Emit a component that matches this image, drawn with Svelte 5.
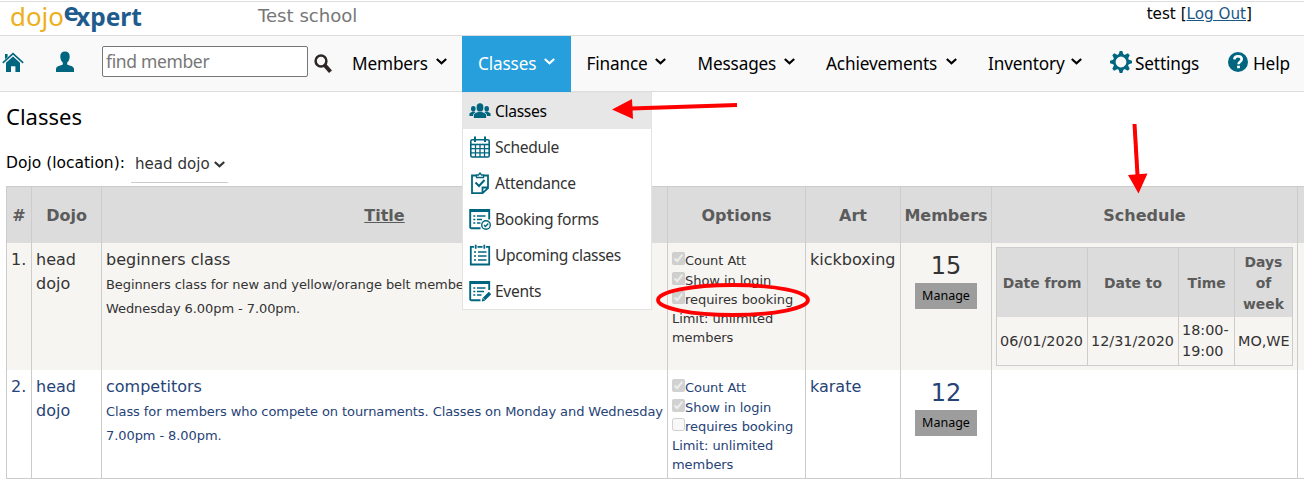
<script>
  const menu = [
    { label: "Members", width: 126 },
    { label: "Classes", width: 108.5, active: true },
    { label: "Finance", width: 111 },
    { label: "Messages", width: 128.5 },
    { label: "Achievements", width: 162 },
    { label: "Inventory", width: 125 },
  ];

  const submenu = [
    { label: "Classes", icon: "group", active: true },
    { label: "Schedule", icon: "calendar" },
    { label: "Attendance", icon: "clipboard" },
    { label: "Booking forms", icon: "booking" },
    { label: "Upcoming classes", icon: "list" },
    { label: "Events", icon: "events" },
  ];

  const classes = [
    {
      id: 1,
      dojo: "head dojo",
      title: "beginners class",
      description:
        "Beginners class for new and yellow/orange belt members. Classes on Monday and Wednesday 6.00pm - 7.00pm.",
      booking: true,
      art: "kickboxing",
      members: 15,
      schedule: { from: "06/01/2020", to: "12/31/2020", time: "18:00-19:00", days: "MO,WE" },
    },
    {
      id: 2,
      dojo: "head dojo",
      title: "competitors",
      description:
        "Class for members who compete on tournaments. Classes on Monday and Wednesday 7.00pm - 8.00pm.",
      booking: false,
      art: "karate",
      members: 12,
    },
  ];
</script>

{#snippet chevron()}
  <svg class="chevron" width="11" height="7" viewBox="0 0 11 7">
    <path d="M.8 1 5.5 5.2 10.2 1" fill="none" stroke="currentColor" stroke-width="2.2" />
  </svg>
{/snippet}

{#snippet menuIcon(name)}
  <svg class="menu-icon" width="22" height="22" viewBox="0 0 22 22" fill="none" stroke="#006680" stroke-width="1.6">
    {#if name === "group"}
      <g fill="#006680" stroke="none">
        <ellipse cx="11" cy="7.4" rx="3.4" ry="4.2" />
        <path d="M4.9 18v-3c0-1.6 2.2-2.2 4.6-3h3c2.4.8 4.6 1.4 4.6 3v3z" />
        <ellipse cx="4.3" cy="8.7" rx="2.3" ry="2.8" />
        <ellipse cx="17.7" cy="8.7" rx="2.3" ry="2.8" />
        <path d="M.4 16v-2c0-1.2 1.6-1.7 3-2.3h2.3l1 .6c-2 .8-2.6 1.7-2.6 3.7zM21.6 16v-2c0-1.2-1.6-1.7-3-2.3h-2.3l-1 .6c2 .8 2.6 1.7 2.6 3.7z" />
      </g>
    {:else if name === "calendar"}
      <rect x="1.8" y="3.8" width="18.4" height="17.2" rx="1.5" />
      <path d="M2 8.5h18" />
      <path d="M2 12.7h18M2 16.8h18M6.5 9v12M11 9v12M15.5 9v12" stroke-width="1.3" />
      <path d="M6 .5v5.5M16 .5v5.5" stroke-width="2" />
    {:else if name === "clipboard"}
      <path d="M7 3.5H3v17.700h10.5l5.500-5V3.500H15M19 15.5h-5.500v5" stroke-width="1.8" />
      <path d="M7.5 5.500V3h2L11 1l1.500 2h2v2.500z" stroke-width="1.3" />
      <path d="m6.5 10.5 3.500 3.500 5.500-6" stroke-width="2" />
    {:else if name === "booking"}
      <path d="M11.500 20.200H2.500q-1.300 0-1.300-1.300V2h19v9.500M1.2 3h19" stroke-width="1.9" />
      <path d="M4.3 8h2M8 8h8.5M4.3 11.5h2M8 11.5h5M4.3 15h2M8 15h3.5" />
      <circle cx="17" cy="17" r="4.3" stroke-width="1.4" />
      <path d="m15 17 1.5 1.6 2.8-3" stroke-width="1.4" />
    {:else if name === "list"}
      <path d="M5 2.800H1.800V20.500h18.400V2.800H17M8.5 2.800h5M6.700.8v4M15.300.8v4" stroke-width="1.8" />
      <path d="M5 8h2M9 8h8.5M5 12h2M9 12h8.5M5 16h2M9 16h8.5" />
    {:else}
      <path d="M11.500 20.200H2.500q-1.300 0-1.300-1.300V2h19v8M1.2 3h19" stroke-width="1.9" />
      <path d="M4.3 8h2M8 8h8.5M4.3 11.5h2M8 11.5h7M4.3 15h2M8 15h4.5" />
      <path d="m15 19 6-6" stroke-width="3.4" />
      <path d="m12.700 21.500.8-3.500 2.700 2.700z" fill="#006680" stroke="none" />
    {/if}
  </svg>
{/snippet}

<div class="page">
  <header>
    <svg class="logo" width="136" height="33" viewBox="0 0 136 33">
      <text x="10" y="23.5" textLength="54" lengthAdjust="spacingAndGlyphs" class="logo-dojo">dojo</text>
      <text x="63.5" y="19" textLength="15.5" lengthAdjust="spacingAndGlyphs" class="logo-expert">e</text>
      <text x="76" y="23.5" textLength="66" lengthAdjust="spacingAndGlyphs" class="logo-expert">xpert</text>
    </svg>
    <span class="school">Test school</span>
    <span class="account">test [<a href="#logout">Log Out</a>]</span>
  </header>

  <nav>
    <div class="tools">
      <svg class="home" width="22" height="22" viewBox="0 0 22 22" fill="#006680">
        <path d="M3 3h2.6v3L3 8.2zM11 5.6l7 6.2V21h-4.6v-5.8H9V21H4v-9.2z" />
        <path d="M.8 11.8 11 2.6l10.2 9.2" fill="none" stroke="#006680" stroke-width="1.6" />
      </svg>
      <svg class="person" width="20" height="22" viewBox="0 0 20 22" fill="#006680">
        <path d="M10 .5c3 0 4.7 2 4.7 4.8 0 2.6-.9 5-2.5 6.3v1.9c2 1.200 6.800 1.400 6.800 4.500v3H1v-3c0-3.100 4.800-3.300 6.800-4.500v-1.900C6.200 10.300 5.300 7.900 5.300 5.300 5.300 2.500 7 .5 10 .5z" />
      </svg>
      <input type="text" placeholder="find member" />
      <svg class="search" width="19" height="20" viewBox="0 0 19 20" fill="none" stroke="#2d2624">
        <circle cx="7" cy="7" r="5.4" stroke-width="2.5" />
        <path d="m10.8 11.3 5.7 6.5" stroke-width="4" />
      </svg>
    </div>
    {#each menu as item}
      <div class="menu-item" class:active={item.active} style="width: {item.width}px">
        <span>{item.label}</span>
        {@render chevron()}
        {#if item.active}
          <div class="dropdown">
            {#each submenu as entry}
              <div class="entry" class:selected={entry.active}>
                {@render menuIcon(entry.icon)}
                <span>{entry.label}</span>
              </div>
            {/each}
          </div>
        {/if}
      </div>
    {/each}
    <div class="settings">
      <svg width="24" height="24" viewBox="-12 -12 24 24" fill="none" stroke="#006680">
        <circle r="6.7" stroke-width="2.6" />
        {#each [0, 45, 90, 135, 180, 225, 270, 315] as angle}
          <path d="M-2.6-7-1.3-11H1.3L2.6-7z" fill="#006680" stroke="none" transform="rotate({angle})" />
        {/each}
      </svg>
      <span>Settings</span>
    </div>
    <div class="help">
      <svg width="20" height="20" viewBox="0 0 20 20">
        <circle cx="10" cy="10" r="10" fill="#006680" />
        <path d="M6.3 7.4C6.5 5.2 8 4.3 10 4.3c2.2 0 3.7 1.2 3.7 3 0 2.4-3.2 2.5-3.2 5" fill="none" stroke="#fff" stroke-width="2.6" />
        <path d="M9.1 13.7h2.8v2.5H9.1z" fill="#fff" />
      </svg>
      <span>Help</span>
    </div>
  </nav>

  <main>
    <h1>Classes</h1>
    <div class="filter">
      <span>Dojo (location):</span>
      <div class="select">head dojo {@render chevron()}</div>
    </div>

    <div class="grid">
      <div class="row head">
        <div>#</div>
        <div>Dojo</div>
        <div><u>Title</u></div>
        <div>Options</div>
        <div>Art</div>
        <div>Members</div>
        <div>Schedule</div>
        <div></div>
      </div>
      {#each classes as item}
        <div class="row" class:first={item.id === 1} class:second={item.id === 2}>
          <div>{item.id}.</div>
          <div class="dojo">{item.dojo}</div>
          <div>
            {item.title}
            <p>{item.description}</p>
          </div>
          <div class="options">
            <label><input type="checkbox" checked disabled />Count Att</label>
            <label><input type="checkbox" checked disabled />Show in login</label>
            <label><input type="checkbox" checked={item.booking} disabled />requires booking</label>
            <span>Limit: unlimited members</span>
          </div>
          <div>{item.art}</div>
          <div class="members">
            <span class="count">{item.members}</span>
            <button>Manage</button>
          </div>
          <div class="schedule">
            {#if item.schedule}
              <div class="times times-head">
                <div>Date from</div>
                <div>Date to</div>
                <div>Time</div>
                <div>Days of week</div>
              </div>
              <div class="times">
                <div>{item.schedule.from}</div>
                <div>{item.schedule.to}</div>
                <div>{item.schedule.time}</div>
                <div>{item.schedule.days}</div>
              </div>
            {/if}
          </div>
          <div></div>
        </div>
      {/each}
    </div>
  </main>

  <svg class="marks" width="1304" height="484" viewBox="0 0 1304 484" fill="none" stroke="#f00">
    <path d="M737 105 631 108.5" stroke-width="4" />
    <path d="M612 109.5 632 99l1 20z" fill="#f00" stroke="none" />
    <path d="M1134.5 124 1137.5 175" stroke-width="4" />
    <path d="M1138.5 193.5 1128 175l19.5-1.5z" fill="#f00" stroke="none" />
    <ellipse cx="733" cy="300" rx="75" ry="15" stroke-width="3.8" />
  </svg>
</div>

<style>
  :global(body) {
    background: #fff;
  }

  .page {
    position: relative;
    width: 1304px;
    height: 484px;
    overflow: hidden;
    font-family: Verdana, "DejaVu Sans", sans-serif;
    font-size: 16px;
    color: #000;
  }

  .page * {
    box-sizing: border-box;
  }

  header {
    display: flex;
    height: 34px;
    margin-top: 1px;
    border-top: 1px solid #ddd;
  }

  .logo {
    flex: none;
    overflow: visible;
  }

  .logo-dojo,
  .logo-expert {
    font-family: "Noto Sans", sans-serif;
    font-size: 25.5px;
    fill: #edaf1b;
  }

  .logo-expert {
    font-weight: 700;
    fill: #1f5c8d;
  }

  .school {
    margin-left: 122px;
    font-size: 18.1px;
    line-height: 28px;
    color: #777;
  }

  .account {
    margin: 0 52px 0 auto;
    font-size: 15.2px;
    line-height: 24px;
  }

  .account a {
    color: #1b5786;
  }

  nav {
    display: flex;
    height: 57px;
    border: solid #ddd;
    border-width: 1px 0;
    background: #f9f9f9;
    font-family: "Noto Sans", sans-serif;
    font-size: 17.2px;
    letter-spacing: -0.15px;
  }

  .tools {
    display: flex;
    width: 336px;
    padding: 10px 0 0 2px;
  }

  .tools svg {
    flex: none;
  }

  .home {
    margin-top: 5px;
  }

  .person {
    margin: 5px 0 0 31px;
  }

  .tools input {
    width: 206px;
    height: 31px;
    margin-left: 27px;
    padding: 0 3px 2px;
    border: 1px solid #767676;
    border-radius: 2px;
    background: #fff;
    font: 17.5px "Noto Sans", sans-serif;
    letter-spacing: -0.35px;
  }

  .tools input::placeholder {
    color: #777;
  }

  .search {
    margin: 8px 0 0 6px;
  }

  .menu-item {
    position: relative;
    display: flex;
    flex: none;
    justify-content: space-between;
    height: 56px;
    padding: 0 15.5px 0 16px;
    line-height: 55px;
  }

  .chevron {
    flex: none;
  }

  .menu-item > .chevron {
    margin-top: 22px;
  }

  .menu-item.active {
    background: #269fdc;
    color: #fff;
  }

  .dropdown {
    position: absolute;
    z-index: 1;
    top: 56px;
    left: 0;
    width: 190px;
    border: 1px solid #e3e3e3;
    background: #fff;
    color: #333;
    font-size: 15.6px;
    letter-spacing: -0.33px;
    line-height: 36px;
  }

  .entry {
    display: flex;
    align-items: center;
    height: 36px;
    padding-left: 6px;
    gap: 4px;
  }

  .entry.selected {
    background: #e7e7e7;
    color: #000;
  }

  .settings,
  .help {
    display: flex;
    flex: none;
    line-height: 55px;
  }

  .settings {
    width: 131px;
    padding-left: 12px;
    gap: 2px;
  }

  .settings svg {
    margin-top: 14px;
  }

  .help {
    gap: 5px;
  }

  .help svg {
    margin-top: 16px;
  }

  main {
    padding-left: 6px;
  }

  h1 {
    height: 54px;
    margin: 0;
    font: 400 22px/49px "Noto Sans", sans-serif;
  }

  .filter {
    display: flex;
    height: 40px;
    font-size: 15.5px;
    line-height: 34px;
  }

  .select {
    display: flex;
    align-items: center;
    justify-content: space-between;
    width: 97px;
    height: 37px;
    margin-left: 6px;
    padding: 0 3px 0 4px;
    border-bottom: 1px solid #ccc;
    font-size: 15.1px;
    color: #333;
  }

  .grid {
    width: 1298px;
    border: solid #ccc;
    border-width: 1px 0 1px 1px;
  }

  .row {
    display: grid;
    grid-template-columns: 25px 70px 566px 138px 95px 91px 306px 6px;
    height: 108px;
    line-height: 24px;
  }

  .row > div {
    padding: 5px 4px 0;
    border-right: 1px solid #ccc;
  }

  .row > div:last-child {
    padding: 0;
    border: 0;
  }

  .row.head {
    height: 56px;
    background: #dcdcdc;
    color: #5b5b5b;
    font-weight: 700;
    text-align: center;
  }

  .row.head > div {
    padding: 17px 0 0;
  }

  .row.first {
    height: 127px;
    background: #f7f5f2;
    color: #333;
  }

  .row.second {
    color: #264377;
  }

  .row p {
    margin: 1px -4px 0 0;
    font-size: 13px;
    letter-spacing: -0.08px;
  }

  .row .dojo {
    padding-right: 20px;
  }

  .row .options {
    padding: 8px 4px 0;
    font-size: 13px;
    line-height: 19px;
    letter-spacing: -0.05px;
  }

  .options label {
    display: flex;
    height: 19px;
  }

  .options label:first-child {
    height: 20px;
  }

  .options input {
    flex: none;
    width: 13px;
    height: 13px;
    margin: 1px 0 0;
  }

  .row .members {
    display: flex;
    flex-direction: column;
    align-items: center;
    padding-top: 6px;
  }

  .count {
    font-size: 24px;
    line-height: 34px;
  }

  button {
    width: 62px;
    height: 26px;
    padding: 0 0 1px;
    border: 0;
    background: #9d9d9d;
    color: #000;
    font: 12.5px "Noto Sans", sans-serif;
  }

  .row .schedule {
    padding-top: 4px;
  }

  .times {
    display: grid;
    grid-template-columns: 91px 91px 56px 58px;
    width: 297px;
    height: 49px;
    border: solid #ccc;
    border-width: 0 0 1px 1px;
    font-size: 14.4px;
    line-height: 21px;
  }

  .times > div {
    display: flex;
    align-items: center;
    padding-left: 3px;
    border-right: 1px solid #ccc;
  }

  .times-head {
    height: 70px;
    border-width: 1px 0 0 1px;
    background: #dcdcdc;
    color: #5b5b5b;
    font-size: 13.9px;
    font-weight: 700;
    text-align: center;
  }

  .times-head > div {
    justify-content: center;
    padding: 1px 4px 0;
  }

  .marks {
    position: absolute;
    z-index: 2;
    top: 0;
    left: 0;
    pointer-events: none;
  }
</style>
